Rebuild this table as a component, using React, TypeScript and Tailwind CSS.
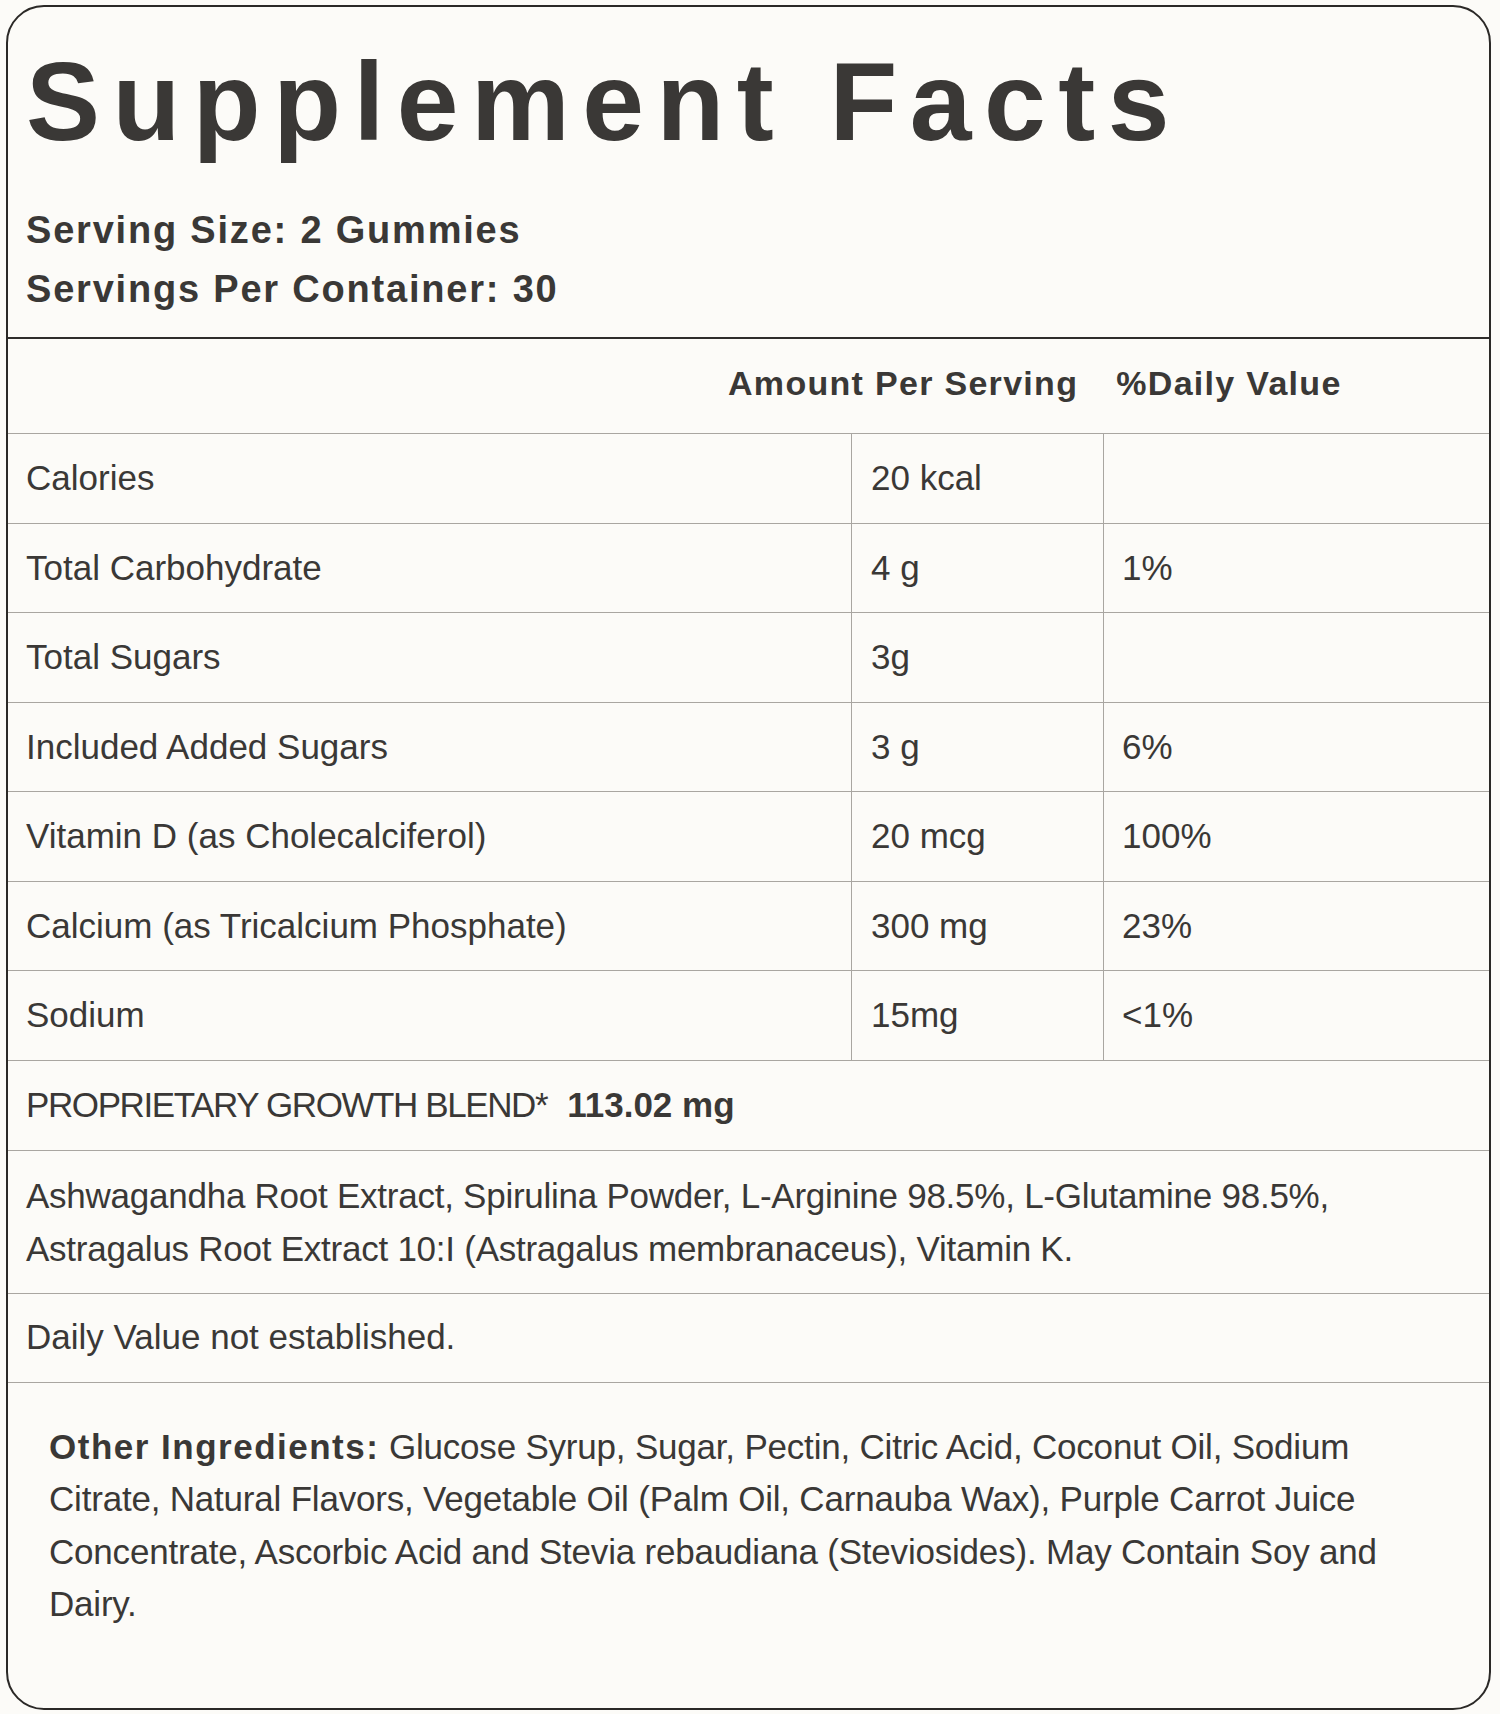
const rows = [
  { name: 'Calories', amount: '20 kcal', dv: '' },
  { name: 'Total Carbohydrate', amount: '4 g', dv: '1%' },
  { name: 'Total Sugars', amount: '3g', dv: '' },
  { name: 'Included Added Sugars', amount: '3 g', dv: '6%' },
  { name: 'Vitamin D (as Cholecalciferol)', amount: '20 mcg', dv: '100%' },
  { name: 'Calcium (as Tricalcium Phosphate)', amount: '300 mg', dv: '23%' },
  { name: 'Sodium', amount: '15mg', dv: '<1%' },
];

export default function App() {
  return (
    <div
      className="min-h-screen bg-[#fcfbf8] pt-[5px] pl-[6px] pb-[4px] text-[#3a3836]"
      style={{ fontFamily: '"Liberation Sans", Arial, sans-serif' }}
    >
      <div className="w-[1485px] h-[1705px] rounded-[38px] border-2 border-[#2b2927] bg-[#fcfbf8] overflow-hidden flex flex-col">
        {/* Title and serving info */}
        <div className="px-[18px] pt-[40px] pb-[18px] border-b-2 border-[#2f2d2b]">
          <h1 className="text-[111px] leading-none font-bold tracking-[12.5px] whitespace-nowrap">Supplement Facts</h1>
          <div className="mt-[43px] text-[38px] leading-[59px] font-bold tracking-[1.8px]">
            <p>Serving Size: 2 Gummies</p>
            <p>Servings Per Container: 30</p>
          </div>
        </div>

        {/* Column headings */}
        <div className="h-[95px] pb-[5px] flex items-center pl-[720px] gap-[38px] text-[34px] font-bold tracking-[1.3px] border-b border-[#a9a6a1]">
          <span>Amount Per Serving</span>
          <span>%Daily Value</span>
        </div>

        {/* Nutrient rows */}
        {rows.map((row) => (
          <div key={row.name} className="grid grid-cols-[843px_252px_1fr] h-[89.5px] border-b border-[#a9a6a1] text-[35px]">
            <div className="flex items-center pl-[18px]">{row.name}</div>
            <div className="flex items-center pl-[19px] border-l border-[#a9a6a1]">{row.amount}</div>
            <div className="flex items-center pl-[18px] border-l border-[#a9a6a1]">{row.dv}</div>
          </div>
        ))}

        {/* Proprietary blend */}
        <div className="h-[90px] flex items-center pl-[18px] border-b border-[#a9a6a1] text-[35px]">
          <span className="tracking-[-1.4px]">PROPRIETARY GROWTH BLEND*</span>
          <span className="ml-[20px] font-bold">113.02 mg</span>
        </div>

        <div className="px-[18px] py-[18px] border-b border-[#a9a6a1] text-[35px] leading-[53px] tracking-[-0.25px]">
          Ashwagandha Root Extract, Spirulina Powder, L-Arginine 98.5%, L-Glutamine 98.5%, Astragalus Root Extract 10:I
          (Astragalus membranaceus), Vitamin K.
        </div>

        <div className="h-[89px] flex items-center pl-[18px] border-b border-[#a9a6a1] text-[35px]">
          Daily Value not established.
        </div>

        {/* Other ingredients */}
        <div className="px-[41px] pt-[38px] text-[35px] leading-[52.5px] tracking-[-0.2px]">
          <span className="font-bold tracking-[1.5px]">Other Ingredients:</span> Glucose Syrup, Sugar, Pectin, Citric
          Acid, Coconut Oil, Sodium Citrate, Natural Flavors, Vegetable Oil (Palm Oil, Carnauba Wax), Purple Carrot Juice
          Concentrate, Ascorbic Acid and Stevia rebaudiana (Steviosides). May Contain Soy and Dairy.
        </div>
      </div>
    </div>
  );
}
